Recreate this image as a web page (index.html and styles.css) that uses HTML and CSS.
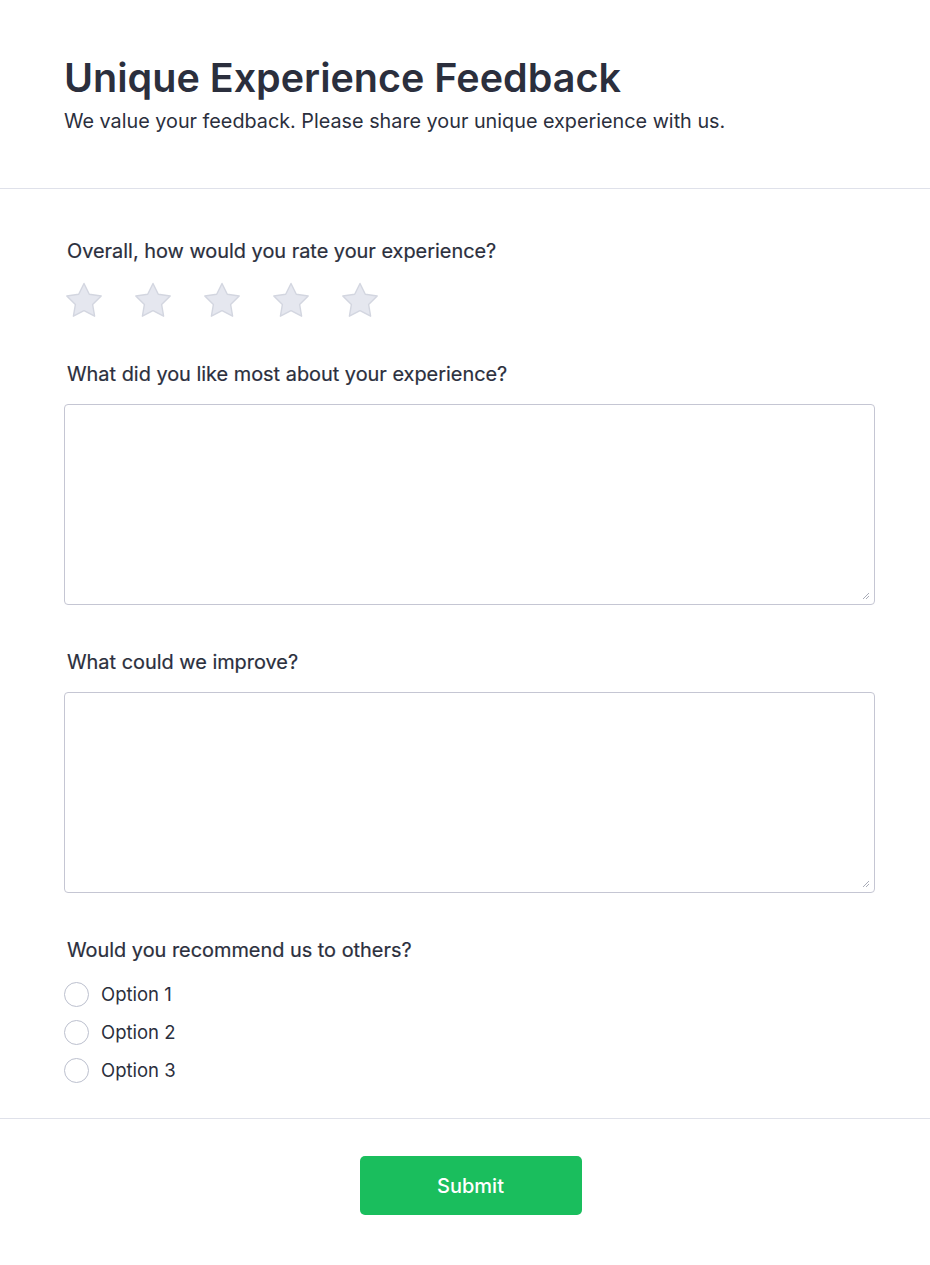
FILE: index.html
```html
<!DOCTYPE html>
<html lang="en">
<head>
<meta charset="utf-8">
<title>Unique Experience Feedback</title>
<link rel="stylesheet" href="styles.css">
</head>
<body>
<div class="page">
  <header class="header">
    <h1 class="title">Unique Experience Feedback</h1>
    <p class="subtitle">We value your feedback. Please share your unique experience with us.</p>
  </header>
  <main class="form">
    <div class="question q-rating">
      <label class="label">Overall, how would you rate your experience?</label>
      <div class="stars">
        <svg class="star" viewBox="0 0 40 38"><path d="M20 2.5 L25.3 13.3 L37.2 15 L28.6 23.4 L30.6 35.2 L20 29.6 L9.4 35.2 L11.4 23.4 L2.8 15 L14.7 13.3 Z"/></svg>
        <svg class="star" viewBox="0 0 40 38"><path d="M20 2.5 L25.3 13.3 L37.2 15 L28.6 23.4 L30.6 35.2 L20 29.6 L9.4 35.2 L11.4 23.4 L2.8 15 L14.7 13.3 Z"/></svg>
        <svg class="star" viewBox="0 0 40 38"><path d="M20 2.5 L25.3 13.3 L37.2 15 L28.6 23.4 L30.6 35.2 L20 29.6 L9.4 35.2 L11.4 23.4 L2.8 15 L14.7 13.3 Z"/></svg>
        <svg class="star" viewBox="0 0 40 38"><path d="M20 2.5 L25.3 13.3 L37.2 15 L28.6 23.4 L30.6 35.2 L20 29.6 L9.4 35.2 L11.4 23.4 L2.8 15 L14.7 13.3 Z"/></svg>
        <svg class="star" viewBox="0 0 40 38"><path d="M20 2.5 L25.3 13.3 L37.2 15 L28.6 23.4 L30.6 35.2 L20 29.6 L9.4 35.2 L11.4 23.4 L2.8 15 L14.7 13.3 Z"/></svg>
      </div>
    </div>
    <div class="question q-text">
      <label class="label">What did you like most about your experience?</label>
      <div class="field">
        <textarea class="textarea"></textarea>
        <svg class="grip" viewBox="0 0 10 10"><path d="M9 3 L3 9 M9 6 L6 9"/></svg>
      </div>
    </div>
    <div class="question q-text">
      <label class="label">What could we improve?</label>
      <div class="field">
        <textarea class="textarea"></textarea>
        <svg class="grip" viewBox="0 0 10 10"><path d="M9 3 L3 9 M9 6 L6 9"/></svg>
      </div>
    </div>
    <div class="question q-radio">
      <label class="label">Would you recommend us to others?</label>
      <div class="options">
        <label class="option"><span class="radio"></span><span>Option 1</span></label>
        <label class="option"><span class="radio"></span><span>Option 2</span></label>
        <label class="option"><span class="radio"></span><span>Option 3</span></label>
      </div>
    </div>
  </main>
  <footer class="footer">
    <button class="submit" type="button">Submit</button>
  </footer>
</div>
</body>
</html>
```
FILE: styles.css
```css
* { box-sizing: border-box; }
html, body { margin: 0; padding: 0; background: #ffffff; }
body {
  font-family: Inter, "Noto Sans", "Liberation Sans", sans-serif;
  color: #2b2f3d;
}
.page { width: 930px; }
.header {
  padding: 54px 55px 53px 64px;
  border-bottom: 1px solid #dfe1ea;
}
.title {
  margin: 0;
  font-size: 39.5px;
  line-height: 48px;
  font-weight: 600;
  color: #2b2f3d;
}
.subtitle {
  margin: 5px 0 0;
  font-size: 19.8px;
  line-height: 28px;
  font-weight: 400;
  color: #2b2f3d;
}
.form {
  padding: 48px 55px 29px 64px;
  border-bottom: 1px solid #dfe1ea;
}
.question { display: flex; flex-direction: column; }
.label {
  display: block;
  padding-left: 3px;
  font-size: 19.9px;
  line-height: 28px;
  font-weight: 400;
  color: #2b2f3d;
  -webkit-text-stroke: 0.2px #2b2f3d;
}
.stars {
  display: flex;
  gap: 29px;
  margin-top: 16px;
}
.star {
  width: 40px;
  height: 38px;
  display: block;
}
.star path {
  fill: #e5e7ef;
  stroke: #d3d6e0;
  stroke-width: 1.4;
  stroke-linejoin: round;
}
.q-text { margin-top: 41px; }
.q-text + .q-text { margin-top: 43px; }
.field {
  position: relative;
  width: 811px;
  margin-top: 16px;
}
.textarea {
  display: block;
  width: 811px;
  height: 201px;
  border: 1px solid #c5c6d3;
  border-radius: 4px;
  background: #fff;
  resize: none;
  font-family: inherit;
  font-size: 16px;
}
.grip {
  position: absolute;
  right: 5px;
  bottom: 5px;
  width: 10px;
  height: 10px;
}
.grip path {
  stroke: #a9acb8;
  stroke-width: 1;
  fill: none;
}
.q-radio { margin-top: 43px; }
.options {
  display: flex;
  flex-direction: column;
  margin-top: 11px;
}
.option {
  display: flex;
  align-items: center;
  gap: 12px;
  height: 38px;
  font-size: 18.5px;
  font-weight: 400;
  color: #2b2f3d;
}
.radio {
  width: 25px;
  height: 25px;
  border: 1px solid #bcc0ce;
  border-radius: 50%;
  background: #fff;
  flex: none;
}
.footer {
  display: flex;
  justify-content: center;
  padding: 37px 0 50px;
}
.submit {
  width: 222px;
  height: 59px;
  margin-left: 11px;
  border: none;
  border-radius: 5px;
  background: #1abe5d;
  color: #ffffff;
  font-family: inherit;
  font-size: 20px;
  font-weight: 500;
}
```
